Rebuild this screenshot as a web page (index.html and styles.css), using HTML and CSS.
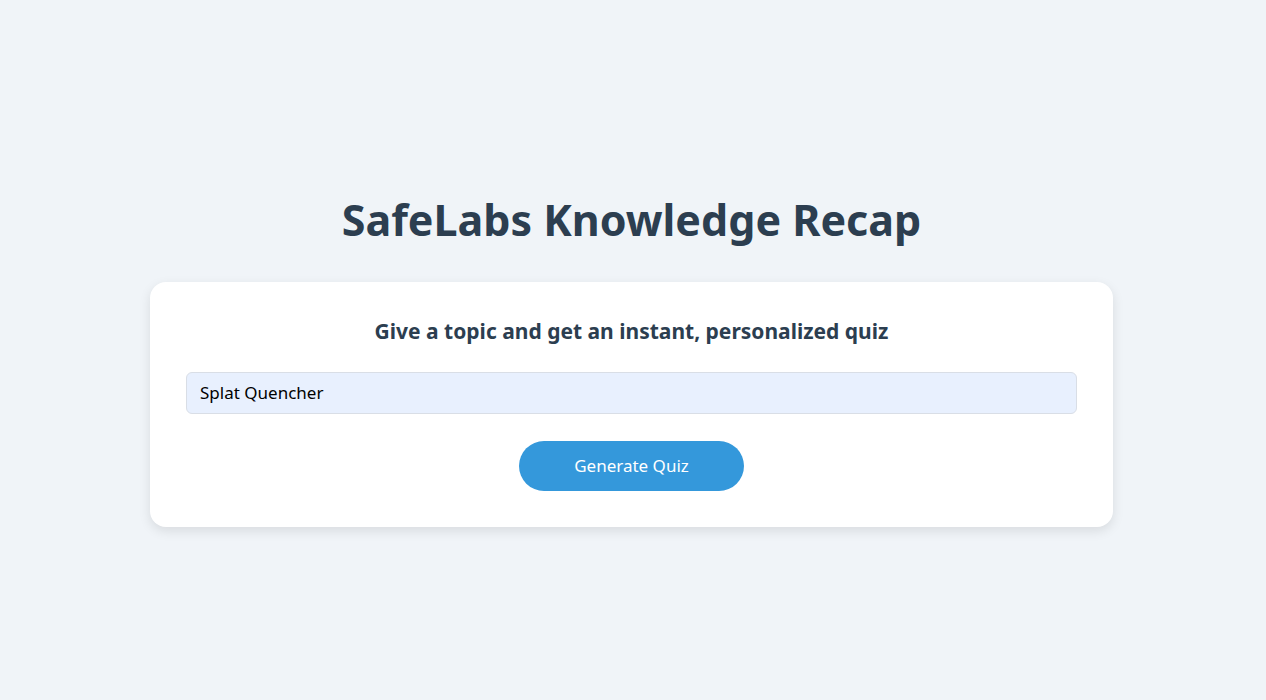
FILE: index.html
```html
<!DOCTYPE html>
<html lang="en">
<head>
<meta charset="utf-8">
<title>SafeLabs Knowledge Recap</title>
<link rel="stylesheet" href="styles.css">
</head>
<body>
<main class="page">
  <h1 class="title">SafeLabs Knowledge Recap</h1>
  <section class="card">
    <h2 class="subtitle">Give a topic and get an instant, personalized quiz</h2>
    <input class="topic" type="text" value="Splat Quencher">
    <button class="generate" type="button">Generate Quiz</button>
  </section>
</main>
</body>
</html>
```
FILE: styles.css
```css
* { box-sizing: border-box; }
html, body { margin: 0; padding: 0; }
body {
  background: #f0f4f8;
  font-family: "Noto Sans", "Open Sans", sans-serif;
  color: #2c3e50;
}
.page {
  min-height: 700px;
  display: flex;
  flex-direction: column;
  align-items: center;
  justify-content: center;
  padding: 18px 3px 0 0;
}
.title {
  margin: 0 0 34px;
  font-size: 43px;
  font-weight: 700;
  line-height: 56px;
  color: #2c3e50;
}
.card {
  width: 963px;
  background: #ffffff;
  border-radius: 16px;
  box-shadow: 0 4px 12px rgba(0, 0, 0, 0.1);
  padding: 34px 36px 36px;
  display: flex;
  flex-direction: column;
  align-items: center;
}
.subtitle {
  margin: 0 0 26px;
  font-size: 21px;
  font-weight: 700;
  line-height: 30px;
  color: #2c3e50;
}
.topic {
  width: 100%;
  height: 42px;
  padding: 0 13px;
  border: 1px solid #d9dee6;
  border-radius: 6px;
  background: #e8f0fe;
  font-family: inherit;
  font-size: 17px;
  color: #000;
  outline: none;
}
.generate {
  margin-top: 27px;
  width: 225px;
  height: 50px;
  border: none;
  border-radius: 25px;
  background: #3498db;
  color: #fff;
  font-family: inherit;
  font-size: 17px;
  cursor: pointer;
}
```
